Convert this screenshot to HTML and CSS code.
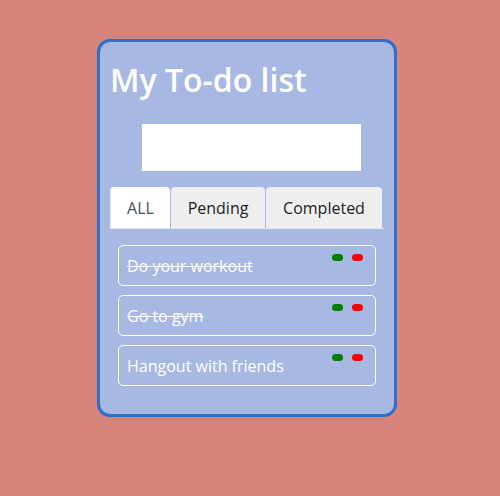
FILE: index.html
```html
<!DOCTYPE html>
<html>
<head>
<meta charset="utf-8">
<link rel="stylesheet" href="styles.css">
</head>
<body>
<div class="card">
  <h1 class="title">My To-do list</h1>
  <input class="new-task" type="text">
  <div class="tabs">
    <div class="tab active">ALL</div>
    <div class="tab">Pending</div>
    <div class="tab">Completed</div>
  </div>
  <ul class="tasks">
    <li class="task done"><span class="task-text">Do your workout</span><span class="dots"><span class="dot green"></span><span class="dot red"></span></span></li>
    <li class="task done"><span class="task-text">Go to gym</span><span class="dots"><span class="dot green"></span><span class="dot red"></span></span></li>
    <li class="task"><span class="task-text">Hangout with friends</span><span class="dots"><span class="dot green"></span><span class="dot red"></span></span></li>
  </ul>
</div>
</body>
</html>
```
FILE: styles.css
```css
* { box-sizing: border-box; }
html, body { margin: 0; padding: 0; }
body {
  background: #d6847c;
  font-family: "Open Sans", sans-serif;
  width: 500px;
  height: 496px;
  overflow: hidden;
}
.card {
  margin: 39px 0 0 97px;
  width: 300px;
  height: 378px;
  background: #a7b8e2;
  border: 3px solid #2f6fc4;
  border-radius: 13px;
  padding: 16px 10px 0 10px;
}
.title {
  margin: 0;
  font-size: 32px;
  line-height: 44px;
  font-weight: 600;
  color: #fff;
}
.new-task {
  display: block;
  margin: 22px 0 0 32px;
  width: 219px;
  height: 47px;
  border: none;
  background: #fff;
  padding: 0;
  outline: none;
}
.tabs {
  margin-top: 16px;
  width: 274px;
  display: flex;
  gap: 1px;
  border-bottom: 1px solid #e6e9f2;
}
.tab {
  height: 41px;
  display: flex;
  align-items: center;
  justify-content: center;
  font-size: 16px;
  color: #222;
  background: #efefef;
  border-radius: 4px 4px 0 0;
}
.tab:nth-child(1) { width: 60px; }
.tab:nth-child(2) { width: 94px; }
.tab:nth-child(3) { width: 116px; }
.tab.active {
  background: #fff;
  color: #495057;
  border-left: 1px solid #e3e6ee;
}
.tasks {
  list-style: none;
  margin: 16px 0 0 8px;
  padding: 0;
  width: 258px;
  display: flex;
  flex-direction: column;
  gap: 9px;
}
.task {
  position: relative;
  height: 41px;
  border: 1px solid #fff;
  border-radius: 5px;
  display: flex;
  align-items: center;
  padding-left: 8px;
  color: #fff;
  font-size: 16px;
}
.task.done .task-text { text-decoration: line-through; }
.dots {
  position: absolute;
  top: 8px;
  right: 12px;
  display: flex;
  gap: 9px;
}
.dot {
  width: 11px;
  height: 7px;
  border-radius: 4px;
}
.dot.green { background: #008000; }
.dot.red { background: #ff0000; }
```
